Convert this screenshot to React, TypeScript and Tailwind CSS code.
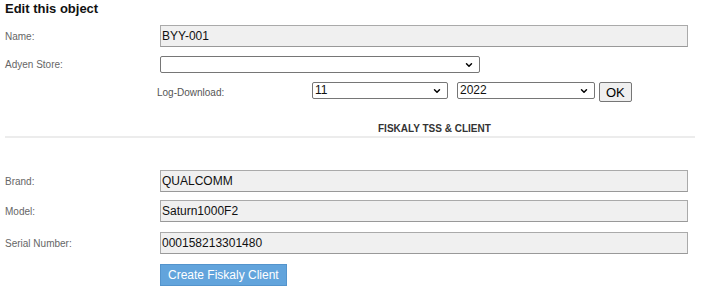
import { ChevronDown } from 'lucide-react';

const font = "font-['Liberation_Sans',Arial,sans-serif]";

function Label({ children }: { children: string }) {
  return <div className="w-[160px] shrink-0 pl-[5px] text-[10px] text-[#666]">{children}</div>;
}

function TextField({ value }: { value: string }) {
  return (
    <div className="w-[528px] h-[22px] bg-[#f0f0f0] border border-[#aaa] border-b-[#999] flex items-center pl-[1px] text-[12px] text-[#111]">
      {value}
    </div>
  );
}

function Select({ value, width }: { value: string; width: string }) {
  return (
    <div className={`relative ${width} h-[17px]`}>
      <select
        defaultValue={value}
        className="block w-full h-[17px] appearance-none bg-white border border-[#767676] rounded-[2px] pl-[2px] text-[12px] leading-[15px] text-[#111] outline-none"
      >
        <option value={value}>{value}</option>
      </select>
      <ChevronDown className="absolute right-[6px] top-[4px] w-[10px] h-[10px] text-black pointer-events-none" strokeWidth={3.5} />
    </div>
  );
}

export default function App() {
  return (
    <div className={`${font} w-[718px] h-[302px] bg-white text-black`}>
      {/* Title */}
      <h1 className="pl-[5px] pt-[1px] text-[13px] font-bold leading-[16px] text-[#111]">Edit this object</h1>

      {/* Name */}
      <div className="flex items-center mt-[8px]">
        <Label>Name:</Label>
        <TextField value="BYY-001" />
      </div>

      {/* Adyen store */}
      <div className="flex items-center mt-[9px]">
        <Label>Adyen Store:</Label>
        <Select value="" width="w-[320px]" />
      </div>

      {/* Log download */}
      <div className="flex items-start mt-[9px]">
        <div className="w-[312px] shrink-0 pl-[157px] pt-[3px] text-[10px] text-[#555]">Log-Download:</div>
        <Select value="11" width="w-[136px]" />
        <div className="w-[9px]" />
        <Select value="2022" width="w-[138px]" />
        <button className="ml-[4px] h-[20px] px-[6px] bg-[#efefef] border border-[#767676] rounded-[2px] text-[13px] text-black leading-none">
          OK
        </button>
      </div>

      {/* Section header */}
      <div className="mt-[21px] pl-[378px] text-[10px] font-bold text-[#333] leading-[12px]">FISKALY TSS &amp; CLIENT</div>
      <div className="mx-[5px] mt-[1px] w-[690px] h-[2px] bg-[#ececec]" />

      {/* Device fields */}
      <div className="flex flex-col mt-[32px]">
        <div className="flex items-center">
          <Label>Brand:</Label>
          <TextField value="QUALCOMM" />
        </div>
        <div className="flex items-center mt-[8px]">
          <Label>Model:</Label>
          <TextField value="Saturn1000F2" />
        </div>
        <div className="flex items-center mt-[10px]">
          <Label>Serial Number:</Label>
          <TextField value="000158213301480" />
        </div>
      </div>

      <div className="pl-[160px] mt-[8px]">
        <button className="h-[22px] px-[7px] bg-[#62a4dc] border border-[#5494cc] text-[12px] text-white leading-none">
          Create Fiskaly Client
        </button>
      </div>
    </div>
  );
}
